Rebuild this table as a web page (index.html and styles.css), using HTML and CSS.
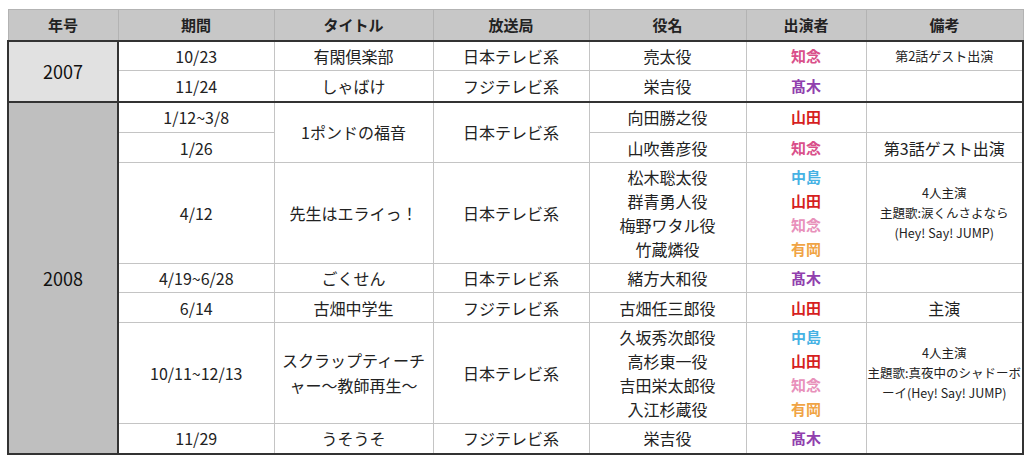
FILE: index.html
```html
<!DOCTYPE html>
<html lang="ja">
<head>
<meta charset="utf-8">
<title>出演作品</title>
<link rel="stylesheet" href="styles.css">
</head>
<body>
<table class="works">
  <colgroup>
    <col class="c-year"><col class="c-period"><col class="c-title"><col class="c-station"><col class="c-role"><col class="c-cast"><col class="c-note">
  </colgroup>
  <thead>
    <tr class="h-row">
      <th>年号</th><th>期間</th><th>タイトル</th><th>放送局</th><th>役名</th><th>出演者</th><th>備考</th>
    </tr>
  </thead>
  <tbody class="group">
    <tr class="r30">
      <td class="year y2007" rowspan="2">2007</td>
      <td>10/23</td><td>有閑倶楽部</td><td>日本テレビ系</td><td>亮太役</td><td class="cast chinen">知念</td><td class="note-s">第2話ゲスト出演</td>
    </tr>
    <tr class="r31">
      <td>11/24</td><td>しゃばけ</td><td>フジテレビ系</td><td>栄吉役</td><td class="cast takaki">髙木</td><td></td>
    </tr>
  </tbody>
  <tbody class="group">
    <tr class="r31">
      <td class="year y2008" rowspan="7">2008</td>
      <td>1/12~3/8</td><td rowspan="2">1ポンドの福音</td><td rowspan="2">日本テレビ系</td><td>向田勝之役</td><td class="cast yamada">山田</td><td></td>
    </tr>
    <tr class="r30">
      <td>1/26</td><td>山吹善彦役</td><td class="cast chinen">知念</td><td>第3話ゲスト出演</td>
    </tr>
    <tr class="r101">
      <td>4/12</td><td>先生はエライっ！</td><td>日本テレビ系</td>
      <td class="multi">松木聡太役<br>群青勇人役<br>梅野ワタル役<br>竹蔵燐役</td>
      <td class="multi cast"><span class="nakajima">中島</span><br><span class="yamada">山田</span><br><span class="chinen-l">知念</span><br><span class="arioka">有岡</span></td>
      <td class="note-m">4人主演<br>主題歌:涙くんさよなら<br>(Hey! Say! JUMP)</td>
    </tr>
    <tr class="r29">
      <td>4/19~6/28</td><td>ごくせん</td><td>日本テレビ系</td><td>緒方大和役</td><td class="cast takaki">髙木</td><td></td>
    </tr>
    <tr class="r30">
      <td>6/14</td><td>古畑中学生</td><td>フジテレビ系</td><td>古畑任三郎役</td><td class="cast yamada">山田</td><td>主演</td>
    </tr>
    <tr class="r101">
      <td>10/11~12/13</td><td class="multi-t">スクラップティーチ<br>ャー〜教師再生〜</td><td>日本テレビ系</td>
      <td class="multi">久坂秀次郎役<br>高杉東一役<br>吉田栄太郎役<br>入江杉蔵役</td>
      <td class="multi cast"><span class="nakajima">中島</span><br><span class="yamada">山田</span><br><span class="chinen-l">知念</span><br><span class="arioka">有岡</span></td>
      <td class="note-m">4人主演<br>主題歌:真夜中のシャドーボ<br>ーイ(Hey! Say! JUMP)</td>
    </tr>
    <tr class="r30">
      <td>11/29</td><td>うそうそ</td><td>フジテレビ系</td><td>栄吉役</td><td class="cast takaki">髙木</td><td></td>
    </tr>
  </tbody>
</table>
</body>
</html>
```

FILE: styles.css
```css
html, body {
  margin: 0;
  padding: 0;
  background: #ffffff;
}

body {
  padding: 9px 0 0 7px;
  font-family: "Noto Sans CJK JP", "Noto Sans", sans-serif;
  color: #222222;
}

.works {
  border-collapse: collapse;
  table-layout: fixed;
  width: 1015px;
  font-size: 16px;
}

.c-year { width: 110px; }
.c-period { width: 156px; }
.c-title { width: 159px; }
.c-station { width: 156px; }
.c-role { width: 157px; }
.c-cast { width: 120px; }
.c-note { width: 157px; }

.works th,
.works td {
  padding: 0;
  text-align: center;
  vertical-align: middle;
  border: 1px solid #c4c4c4;
  line-height: 20px;
  white-space: nowrap;
}

.h-row { height: 31px; }

.works th {
  background: #c7c7c7;
  border-color: #b3b3b3;
  font-weight: bold;
  font-size: 15px;
  color: #222222;
}

.group {
  border: 2px solid #333333;
}

.works td.year {
  font-size: 18px;
  font-weight: normal;
  color: #111111;
  border-right: 2px solid #333333;
}

.y2007 { background: #e1e1e1; }
.y2008 { background: #bfbfbf; }

.r29 { height: 29px; }
.r30 { height: 30px; }
.r31 { height: 31px; }
.r101 { height: 101px; }

.works td.multi { line-height: 24px; }
.works td.multi-t { line-height: 25px; }

.cast { font-weight: bold; font-size: 15px; }

.chinen { color: #d9508a; }
.chinen-l { color: #e891bb; }
.takaki { color: #9140ae; }
.yamada { color: #d61f1f; }
.nakajima { color: #46b2e4; }
.arioka { color: #f0a445; }

.note-s { font-size: 13px; }
.works td.note-m { font-size: 12.5px; line-height: 20px; }
```
